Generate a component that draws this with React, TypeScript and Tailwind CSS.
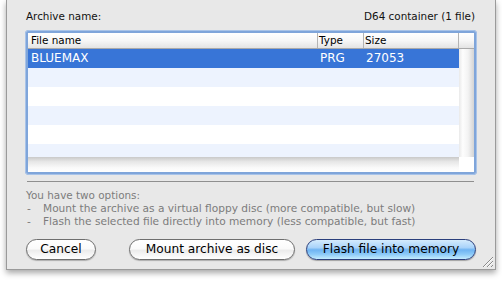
export default function App() {
  const rows = [
    { name: "BLUEMAX", type: "PRG", size: "27053", sel: true, h: "h-[19px]" },
    { name: "", type: "", size: "", sel: false, h: "h-[19px]", alt: true },
    { name: "", type: "", size: "", sel: false, h: "h-[19px]" },
    { name: "", type: "", size: "", sel: false, h: "h-[19px]", alt: true },
    { name: "", type: "", size: "", sel: false, h: "h-[19px]" },
    { name: "", type: "", size: "", sel: false, h: "h-[13px]", alt: true },
  ];
  return (
    <div className="w-[502px] h-[281px] bg-white font-['DejaVu_Sans',sans-serif] overflow-hidden">
      <div className="relative ml-[6px] w-[490px] h-[270px] bg-[#e8e8e8] border-x border-b border-[#9a9a9a] shadow-[0_3px_6px_rgba(0,0,0,0.35)] flex flex-col pl-[18px] pr-[18px] pt-[10px]">
        <div className="flex justify-between text-[10.4px] leading-[13px] text-[#111] pl-[1px] pr-[2px]">
          <span>Archive name:</span>
          <span>D64 container (1 file)</span>
        </div>

        <div className="mt-[7px] h-[145px] rounded-[4px] bg-[#7fa5da] p-[3px] shadow-[inset_0_0_0_1px_#a8c3e8]">
          <div className="h-[139px] bg-white flex flex-col">
            <div className="h-[16px] flex border-b border-[#a9a9a9] bg-[linear-gradient(to_bottom,#ffffff_0%,#f7f7f7_50%,#e4e4e4_100%)] text-[10.4px] leading-[15px] text-black">
              <div className="w-[290px] border-r border-[#b4b4b4] pl-[3px]">File name</div>
              <div className="w-[46px] border-r border-[#b4b4b4] pl-[1px]">Type</div>
              <div className="w-[95px] border-r border-[#b4b4b4] pl-[1px]">Size</div>
              <div className="flex-1" />
            </div>
            <div className="h-[108px] flex">
              <div className="w-[431px] flex flex-col">
                {rows.map((r, i) => (
                  <div
                    key={i}
                    className={`${r.h} flex text-[12px] leading-[19px] ${
                      r.sel ? "bg-[#3875d7] text-white" : r.alt ? "bg-[#edf3fe]" : "bg-white"
                    }`}
                  >
                    <div className="w-[290px] pl-[3px]">{r.name}</div>
                    <div className="w-[46px] pl-[2px]">{r.type}</div>
                    <div className="w-[95px] pl-[2px]">{r.size}</div>
                  </div>
                ))}
              </div>
              <div className="w-[15px] bg-[linear-gradient(to_right,#e9e9e9_0%,#fdfdfd_25%,#f3f3f3_60%,#d4d4d4_100%)]" />
            </div>
            <div className="h-[15px] flex">
              <div className="w-[431px] bg-[linear-gradient(to_bottom,#c9c9c9_0%,#e6e6e6_30%,#f9f9f9_70%,#ffffff_100%)]" />
              <div className="w-[15px] bg-white" />
            </div>
          </div>
        </div>

        <div className="mt-[6px] h-px bg-[#8f8f8f] ml-[2px] mr-[3px]" />

        <div className="mt-[7px] text-[10.6px] leading-[13px] text-[#7c7c7c] pl-[1px]">
          <div className="text-[10.4px]">You have two options:</div>
          <div className="flex">
            <span className="inline-block w-[17px] pl-[1px]">-</span>
            <span>Mount the archive as a virtual floppy disc (more compatible, but slow)</span>
          </div>
          <div className="flex">
            <span className="inline-block w-[17px] pl-[1px]">-</span>
            <span>Flash the selected file directly into memory (less compatible, but fast)</span>
          </div>
        </div>

        <div className="mt-[11px] flex items-center">
          <div className="ml-[1px] w-[70px] h-[21px] rounded-full border border-[#6e6e6e] bg-[linear-gradient(to_bottom,#ffffff_0%,#fafafa_45%,#ececec_55%,#ffffff_100%)] shadow-[0_1px_1px_rgba(0,0,0,0.25)] flex items-center justify-center text-[12.2px] leading-[19px] text-black">
            Cancel
          </div>
          <div className="flex-1" />
          <div className="w-[166px] h-[21px] rounded-full border border-[#6e6e6e] bg-[linear-gradient(to_bottom,#ffffff_0%,#fafafa_45%,#ececec_55%,#ffffff_100%)] shadow-[0_1px_1px_rgba(0,0,0,0.25)] flex items-center justify-center text-[12.2px] leading-[19px] text-black">
            Mount archive as disc
          </div>
          <div className="ml-[11px] mr-[1px] w-[170px] h-[21px] rounded-full border border-[#2b3f7c] bg-[linear-gradient(to_bottom,#d4ebfd_0%,#a9d3fa_40%,#6eb3f2_52%,#8ccaf8_75%,#c4ecfe_100%)] shadow-[0_1px_1px_rgba(0,0,0,0.3)] flex items-center justify-center text-[12.2px] leading-[19px] text-black">
            Flash file into memory
          </div>
        </div>

        <svg className="absolute right-[2px] bottom-[2px]" width="11" height="11" viewBox="0 0 11 11">
          <line x1="1" y1="11" x2="11" y2="1" stroke="#8a8a8a" strokeWidth="1" />
          <line x1="2" y1="11" x2="11" y2="2" stroke="#ffffff" strokeWidth="0.8" />
          <line x1="5" y1="11" x2="11" y2="5" stroke="#8a8a8a" strokeWidth="1" />
          <line x1="6" y1="11" x2="11" y2="6" stroke="#ffffff" strokeWidth="0.8" />
          <line x1="9" y1="11" x2="11" y2="9" stroke="#8a8a8a" strokeWidth="1" />
        </svg>
      </div>
    </div>
  );
}
